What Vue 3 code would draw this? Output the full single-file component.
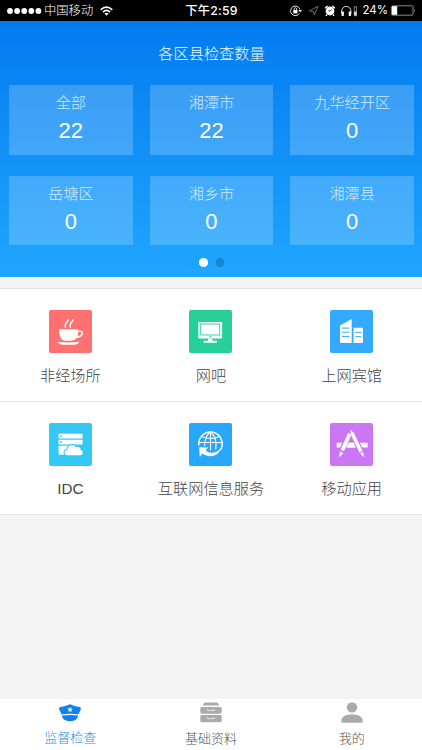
<template>
  <div class="page">
    <!-- 状态栏 -->
    <div class="status-bar">
      <div class="status-left">
        <svg class="signal" width="35" height="8" viewBox="0 0 35 8">
          <circle v-for="n in 5" :key="n" :cx="3 + (n - 1) * 7.1" cy="4" r="2.9" fill="#fff" />
        </svg>
        <span class="carrier">中国移动</span>
        <svg class="wifi" width="13" height="10" viewBox="0 0 13 10">
          <g fill="none" stroke="#fff" stroke-width="1.6">
            <path d="M.7 3.8Q6.5-1.6 12.3 3.8" />
            <path d="M2.9 6.1Q6.5 2.8 10.1 6.1" />
          </g>
          <path d="M4.4 7.5Q6.5 5.8 8.6 7.5L6.5 9.7Z" fill="#fff" />
        </svg>
      </div>
      <div class="status-time">下午2:59</div>
      <div class="status-right">
        <svg width="69" height="13" viewBox="0 0 69 13">
          <!-- 方向锁定 -->
          <path d="M10.5 9.3A4.8 4.8 0 1 1 11 5.5" fill="none" stroke="#ddd" stroke-width="1" />
          <path d="M9.2 6h4l-2 2.5z" fill="#ddd" />
          <rect x="4.3" y="6" width="4.2" height="3.4" fill="#fff" />
          <path d="M5.1 6V5a1.3 1.3 0 0 1 2.6 0v1" fill="none" stroke="#fff" stroke-width=".8" />
          <!-- 定位 -->
          <path d="M20.3 7L29 2.2L25.3 11L24.5 7.3Z" fill="none" stroke="#777" stroke-width=".9" />
          <!-- 闹钟 -->
          <circle cx="41" cy="7" r="4.4" fill="#fff" />
          <path d="M36.2 4.2L38.6 2M45.8 4.2L43.4 2M38 10.5l-1 1.4M44 10.5l1 1.4" stroke="#fff" stroke-width="1.5" />
          <path d="M42.6 5.4L41 7.3L39.4 6.6" fill="none" stroke="#000" stroke-width=".8" />
          <!-- 耳机 -->
          <path d="M52.7 9.5V7a4.6 4.6 0 0 1 9.2 0v2.5" fill="none" stroke="#ddd" stroke-width="1" />
          <rect x="52.5" y="7.5" width="2.4" height="4.5" rx=".8" fill="#fff" />
          <rect x="59.7" y="7.5" width="2.4" height="4.5" rx=".8" fill="#fff" />
          <rect x="65.2" y="2.8" width="2.4" height="9" fill="none" stroke="#999" stroke-width=".8" />
          <rect x="65.2" y="7.5" width="2.4" height="4" fill="#ddd" />
        </svg>
        <span class="percent">24%</span>
        <svg width="25" height="11" viewBox="0 0 25 11">
          <rect x=".5" y=".8" width="21.5" height="9.4" rx="1" fill="none" stroke="#888" />
          <rect x="1" y="1.2" width="5.2" height="8.6" fill="#fff" />
          <path d="M23 3.7q1.6 1.8 0 3.6z" fill="#aaa" />
        </svg>
      </div>
    </div>

    <!-- 各区县数量 -->
    <div class="banner">
      <div class="banner-title">各区县检查数量</div>
      <div class="area-grid">
        <div v-for="area in areas" :key="area.name" class="area-card">
          <div class="area-name">{{ area.name }}</div>
          <div class="area-count">{{ area.count }}</div>
        </div>
      </div>
      <div class="dots">
        <span class="dot active"></span>
        <span class="dot"></span>
      </div>
    </div>

    <!-- 场所分类 -->
    <div class="menu">
      <div v-for="item in menus" :key="item.key" class="menu-item">
        <svg class="menu-icon" :class="item.key" viewBox="0 0 43 43">
          <g v-if="item.key === 'place'">
            <path d="M10 19.3H29.3V20.8C32.5 19.8 34.2 21 34 23.2C33.7 26 30.8 28 27.5 28.1C26.2 30 24.7 30.8 22.5 30.8H16.5C12.4 30.8 10 26 10 19.3ZM29.2 22.2Q29.1 24.7 28.4 26.5C30.7 26 32.3 24.7 32.3 23.1C32.3 21.9 30.8 21.7 29.2 22.2Z" fill="#fff" fill-rule="evenodd" />
            <path d="M8.7 31.8Q19.5 33.3 30.4 31.8Q29 34.7 25 34.7H14Q10 34.7 8.7 31.8Z" fill="#fff" />
            <path d="M19.4 9.8C18.5 12.6 15.3 12.1 16.4 17.3M24.3 9.8C23.4 12.6 20.2 12.1 21.3 17.3" fill="none" stroke="#fff" stroke-width="1.5" stroke-linecap="round" />
          </g>
          <g v-else-if="item.key === 'netbar'">
            <rect x="9.3" y="12" width="23.8" height="16.4" rx="1" fill="#fff" />
            <rect x="11.7" y="14" width="19" height="11" fill="none" stroke="#27cf98" stroke-width=".9" />
            <circle cx="21.3" cy="26.8" r=".9" fill="#27cf98" />
            <path d="M19.2 28.4H23.4V30.8H27.9V32.8H14.7V30.8H19.2Z" fill="#fff" />
          </g>
          <g v-else-if="item.key === 'hotel'">
            <path d="M10 15.6L21.7 9V33H11Q10 33 10 32Z" fill="#fff" />
            <path d="M23.5 17.8H32Q33 17.8 33 18.8V32Q33 33 32 33H23.5Z" fill="#fff" />
            <path d="M12 18.1H19.5M12 22.2H19.5M12 26.4H19.5M25.3 22.4H31M25.3 26.6H31" stroke="#33a9ff" stroke-width="1" />
          </g>
          <g v-else-if="item.key === 'idc'">
            <rect x="9.6" y="10.7" width="24" height="4.7" rx=".6" fill="#fff" />
            <rect x="9.6" y="16.7" width="24" height="4.7" rx=".6" fill="#fff" />
            <rect x="9.6" y="22.7" width="10" height="9" rx=".6" fill="#fff" />
            <circle cx="12" cy="13" r=".9" fill="#34c8f5" />
            <circle cx="12" cy="19" r=".9" fill="#34c8f5" />
            <path d="M18.8 32.3C14.3 32.3 14.6 27 18.4 27C18.4 21.8 25.2 20.4 27 24.4C30 22.9 32.2 25.2 31.6 27.3C34.7 27.7 34.5 32.3 31 32.3Z" fill="#fff" stroke="#34c8f5" stroke-width="2" paint-order="stroke" />
          </g>
          <g v-else-if="item.key === 'service'">
            <g fill="none" stroke="#fff" stroke-width="1.1">
              <path d="M9.9 22.5A11.7 11.7 0 1 1 31.4 27" stroke-width="1.5" />
              <path d="M21.5 9V27.5M10 19.5H33M12.5 13.4Q21.5 17.3 30.5 13.4M21.5 9Q15.4 13.4 15.7 22.7M21.5 9Q28.5 14.5 26.7 26.5" />
            </g>
            <path d="M10.2 24.2L19.3 24.4L16.7 27.2C20.7 31.3 27.5 30.3 31.9 25.5C29.5 33.4 20 35.4 13.6 30.6L10.7 34Z" fill="#fff" />
          </g>
          <g v-else>
            <path d="M6.7 19.7H37.6V24.6H6.7Z" fill="#fff" />
            <!-- 画笔与铅笔，底色描边隔开横杠 -->
            <path d="M19.8 9.5L11.6 28" stroke="#cb76f5" stroke-width="5.6" />
            <path d="M22.5 10L31 29" stroke="#cb76f5" stroke-width="5.6" />
            <path d="M22.2 19L25 24.6H17.6Z" fill="#fff" />
            <path d="M20 10.5L12.2 27.5" stroke="#fff" stroke-width="3.8" />
            <path d="M10 28.6L13.4 30.2L9 34.2Z" fill="#fff" />
            <path d="M20.5 6.6L24.2 10.4L32.6 28L29.4 29.5L20.9 11.8Z" fill="#fff" stroke="#cb76f5" stroke-width="1" paint-order="stroke" />
            <path d="M29.9 30.5L33 29L34.3 34.2Z" fill="#fff" />
          </g>
        </svg>
        <div class="menu-label">{{ item.label }}</div>
      </div>
    </div>

    <!-- 底部导航 -->
    <div class="tab-bar">
      <div class="tab active">
        <svg class="tab-icon" viewBox="0 0 24 22">
          <path d="M12 2.3Q16 4.2 22.4 5.2Q23.5 6.6 22.5 8.2L20.2 12.4Q12 11.2 3.8 12.4L1.5 8.2Q.5 6.6 1.6 5.2Q8 4.2 12 2.3Z" fill="#0c82f6" />
          <path d="M3.9 13.6Q12 12.6 20.1 13.6Q19.6 19.2 12 19.2Q4.4 19.2 3.9 13.6Z" fill="#0c82f6" />
          <path d="M12 4.9L12.8 6.6L14.6 6.8L13.3 8.1L13.6 9.9L12 9L10.4 9.9L10.7 8.1L9.4 6.8L11.2 6.6Z" fill="#fff" />
        </svg>
        <span>监督检查</span>
      </div>
      <div class="tab">
        <svg class="tab-icon" viewBox="0 0 24 22">
          <path d="M5.5 .4H18.5L20.5 3.6H3.5Z" fill="#aaa" />
          <path d="M2.8 5H21.2Q22.7 5 22.7 6.5V9.8Q22.7 11.7 20.9 11.7H3.1Q1.3 11.7 1.3 9.8V6.5Q1.3 5 2.8 5Z" fill="#aaa" />
          <path d="M2.8 13.1H21.2Q22.7 13.1 22.7 14.6V18.4Q22.7 20.3 20.9 20.3H3.1Q1.3 20.3 1.3 18.4V14.6Q1.3 13.1 2.8 13.1Z" fill="#aaa" />
          <path d="M8.5 7V8.4H15.5V7M8.5 15.2V16.6H15.5V15.2" fill="none" stroke="#eee" stroke-width=".9" />
        </svg>
        <span>基础资料</span>
      </div>
      <div class="tab">
        <svg class="tab-icon" viewBox="0 0 24 22">
          <circle cx="12" cy="5.4" r="5.2" fill="#aaa" />
          <path d="M1.4 20.8V17.5Q3 12.4 12 12.2Q21 12.4 22.6 17.5V20.8Z" fill="#aaa" />
        </svg>
        <span>我的</span>
      </div>
    </div>
  </div>
</template>

<script setup>
import { ref } from 'vue';

// 各区县检查数量
const areas = ref([
  { name: '全部', count: 22 },
  { name: '湘潭市', count: 22 },
  { name: '九华经开区', count: 0 },
  { name: '岳塘区', count: 0 },
  { name: '湘乡市', count: 0 },
  { name: '湘潭县', count: 0 }
]);

// 分类入口
const menus = ref([
  { key: 'place', label: '非经场所' },
  { key: 'netbar', label: '网吧' },
  { key: 'hotel', label: '上网宾馆' },
  { key: 'idc', label: 'IDC' },
  { key: 'service', label: '互联网信息服务' },
  { key: 'app', label: '移动应用' }
]);
</script>

<style>
body {
  margin: 0;
}
</style>

<style scoped>
.page {
  width: 100%;
  height: 750px;
  display: flex;
  flex-direction: column;
  overflow: hidden;
  background: #f4f4f4;
  font-family: "Liberation Sans", "Noto Sans CJK SC", sans-serif;
  font-weight: 300;
}

.page svg {
  display: block;
  flex: none;
}

.status-bar {
  height: 21px;
  flex: none;
  display: grid;
  grid-template-columns: 1fr auto 1fr;
  align-items: center;
  padding: 0 6px 0 7px;
  background: #000;
  color: #fff;
  font-size: 12.3px;
  line-height: 21px;
  white-space: nowrap;
}

.status-left,
.status-right {
  display: flex;
  align-items: center;
}

.carrier {
  margin: 0 7px 0 2px;
  padding-top: 2px;
  line-height: 19px;
}

.status-time {
  font-family: Inter, "Noto Sans CJK SC", sans-serif;
  font-weight: 500;
  font-size: 12.3px;
  letter-spacing: 0.2px;
}

.status-right {
  justify-content: flex-end;
}

.percent {
  margin: 0 3px 0 4px;
  font-family: Inter, sans-serif;
  font-weight: 400;
  font-size: 11.5px;
}

.banner {
  height: 256px;
  flex: none;
  box-sizing: border-box;
  padding: 20px 8px 0 9px;
  background: linear-gradient(#037bf0, #1fa6ff);
  color: #fff;
  text-align: center;
}

.banner-title {
  height: 44px;
  line-height: 25px;
  font-size: 15.2px;
  color: #f0f9ff;
}

.area-grid {
  display: grid;
  grid-template-columns: repeat(3, 1fr);
  gap: 21px 17px;
}

.area-card {
  height: 69.5px;
  box-sizing: border-box;
  padding-top: 6px;
  background: rgba(255, 255, 255, 0.2);
}

.area-name {
  line-height: 23px;
  font-size: 15.2px;
  color: #cfeaff;
}

.area-count {
  line-height: 33px;
  font-size: 22px;
}

.dots {
  display: flex;
  justify-content: center;
  gap: 8px;
  padding-top: 13px;
}

.dot {
  width: 8.5px;
  height: 8.5px;
  border-radius: 50%;
  background: #1786cf;
}

.dot.active {
  background: #fff;
}

.menu {
  display: grid;
  grid-template-columns: repeat(3, 1fr);
  grid-auto-rows: 113px;
  margin-top: 11px;
  border-bottom: 1px solid #e2e2e2;
  background: #fff;
}

.menu-item {
  box-sizing: border-box;
  display: flex;
  flex-direction: column;
  align-items: center;
  padding-top: 21px;
  border-top: 1px solid #e2e2e2;
}

.menu-icon {
  width: 43px;
  height: 43px;
  border-radius: 2px;
}

.menu-icon.place {
  background: #ff7070;
}

.menu-icon.netbar {
  background: #27cf98;
}

.menu-icon.hotel {
  background: #33a9ff;
}

.menu-icon.idc {
  background: #34c8f5;
}

.menu-icon.service {
  background: #28a7ff;
}

.menu-icon.app {
  background: #cb76f5;
}

.menu-label {
  margin-top: 11px;
  line-height: 24px;
  font-size: 15.2px;
  color: #444;
}

.tab-bar {
  height: 51px;
  flex: none;
  display: grid;
  grid-template-columns: repeat(3, 1fr);
  margin-top: auto;
  background: #fff;
}

.tab {
  display: flex;
  flex-direction: column;
  align-items: center;
  padding-top: 3px;
  font-size: 13px;
  line-height: 20px;
  color: #555;
}

.tab-icon {
  width: 24px;
  height: 22px;
  margin-bottom: 5px;
}

.tab.active {
  color: #1b92dc;
}

.tab.active .tab-icon {
  margin-bottom: 4px;
}
</style>
